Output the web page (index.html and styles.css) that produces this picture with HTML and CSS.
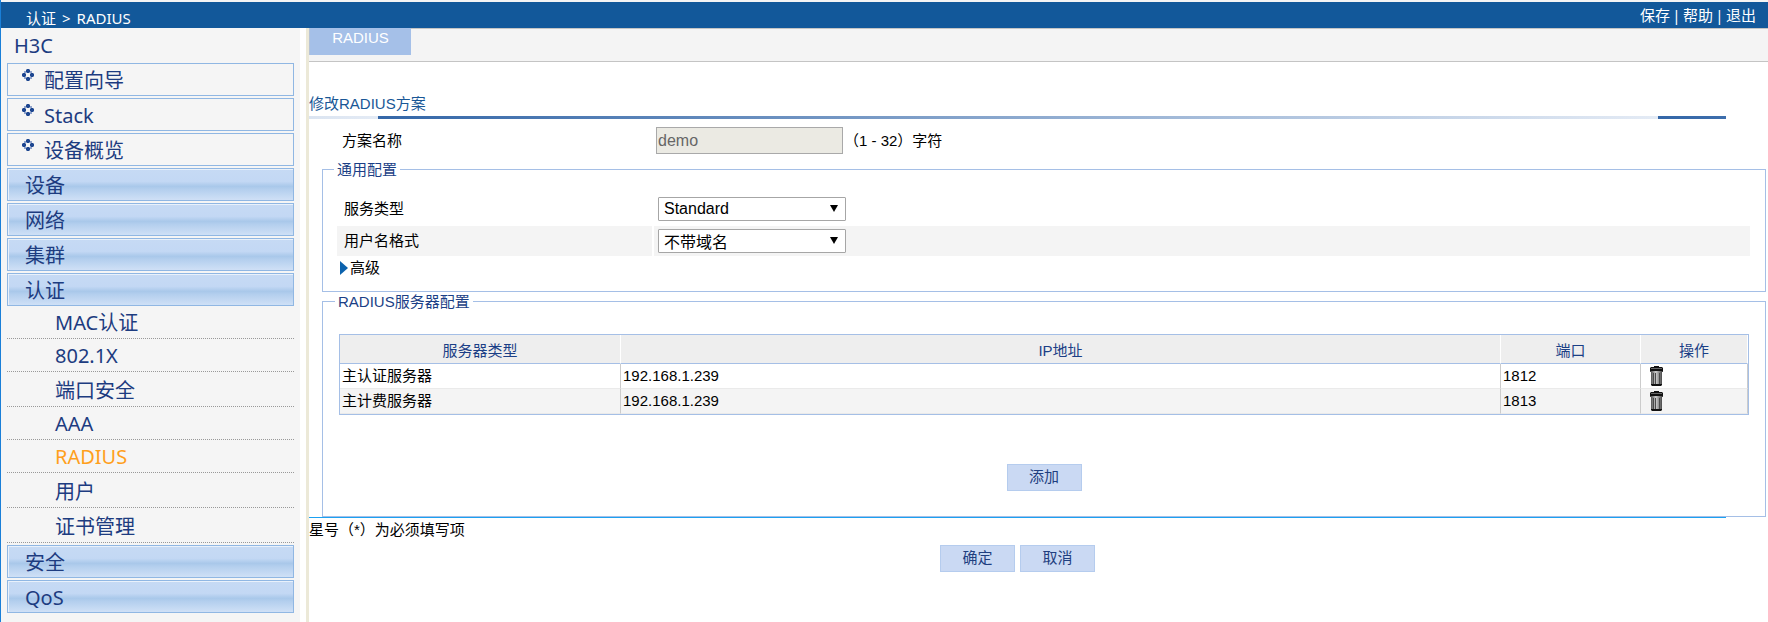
FILE: index.html
```html
<!DOCTYPE html>
<html lang="zh-CN">
<head>
<meta charset="utf-8">
<title>RADIUS</title>
<link rel="stylesheet" href="styles.css">
</head>
<body>
<svg class="defs" width="0" height="0" aria-hidden="true">
  <defs>
    <linearGradient id="metal">
      <stop offset="0" stop-color="#3a3a3a"/>
      <stop offset=".25" stop-color="#8a8a8a"/>
      <stop offset=".45" stop-color="#cfcfcf"/>
      <stop offset=".7" stop-color="#8a8a8a"/>
      <stop offset="1" stop-color="#333"/>
    </linearGradient>
    <symbol id="clover" viewBox="0 0 12 12">
      <g fill="#1d4690">
        <path d="M5 0h2l1 1v2L7 4H5L4 3V1zM5 8h2l1 1v2l-1 1H5l-1-1V9zM1 4h2l1 1v2L3 8H1L0 7V5zM9 4h2l1 1v2l-1 1H9L8 7V5z"/>
      </g>
      <path fill="#8fa3cc" d="M2 2h2v2H2zM8 2h2v2H8zM2 8h2v2H2zM8 8h2v2H8z"/>
    </symbol>
    <symbol id="bin" viewBox="0 0 13 20">
      <path fill="#111" d="M4 0h5v1h3l1 1v3H0V2l1-1h3z"/>
      <path fill="#666" d="M1 2h11v1H1z"/>
      <path fill="url(#metal)" d="M0 5h13v1h-1v12l-1 1H2l-1-1V6H0z"/>
      <path fill="#4a4a4a" d="M3 7h1v11H3zM5 7h1v11H5zM9 7h1v11H9z"/>
      <path fill="#111" d="M1 18h11v1l-1 1H2l-1-1z"/>
    </symbol>
  </defs>
</svg>
<header class="topbar">
  <div class="crumb"><span>认证</span><span>&gt;</span><span>RADIUS</span></div>
  <nav class="toplinks"><a href="#">保存</a><span>|</span><a href="#">帮助</a><span>|</span><a href="#">退出</a></nav>
</header>
<div class="frame">
  <nav class="side">
    <div class="device">H3C</div>
    <div class="menu">
      <a class="quick" href="#"><svg><use href="#clover"/></svg>配置向导</a>
      <a class="quick" href="#"><svg><use href="#clover"/></svg>Stack</a>
      <a class="quick" href="#"><svg><use href="#clover"/></svg>设备概览</a>
      <a class="group" href="#">设备</a>
      <a class="group" href="#">网络</a>
      <a class="group" href="#">集群</a>
      <a class="group" href="#">认证</a>
    </div>
    <div class="submenu">
      <a href="#">MAC认证</a>
      <a href="#">802.1X</a>
      <a class="tall" href="#">端口安全</a>
      <a href="#">AAA</a>
      <a class="current" href="#">RADIUS</a>
      <a class="tall" href="#">用户</a>
      <a class="tall" href="#">证书管理</a>
    </div>
    <div class="menu">
      <a class="group" href="#">安全</a>
      <a class="group" href="#">QoS</a>
    </div>
  </nav>
  <main class="content">
    <div class="tabs"><a class="tab" href="#">RADIUS</a><div class="tabfill"></div></div>
    <h1 class="title">修改RADIUS方案</h1>
    <div class="rule"></div>
    <form class="form">
      <div class="row name">
        <label for="scheme">方案名称</label>
        <input id="scheme" type="text" value="demo" disabled>
        <span>（1 - 32）字符</span>
      </div>
      <fieldset class="general">
        <legend>通用配置</legend>
        <div class="row pair">
          <label for="type">服务类型</label>
          <div class="cell"><span class="picker"><select id="type"><option>Standard</option></select></span></div>
        </div>
        <div class="row pair shaded">
          <label for="format">用户名格式</label>
          <div class="cell"><span class="picker"><select id="format" class="low"><option>不带域名</option></select></span></div>
        </div>
        <button class="advanced" type="button"><svg viewBox="0 0 8 14"><path fill="#0b62ad" d="M0 0l8 7-8 7z"/></svg>高级</button>
      </fieldset>
      <fieldset class="servers">
        <legend>RADIUS服务器配置</legend>
        <table class="grid">
          <colgroup><col class="kind"><col><col class="port"><col class="ops"></colgroup>
          <thead><tr><th>服务器类型</th><th>IP地址</th><th>端口</th><th>操作</th></tr></thead>
          <tbody>
            <tr><td>主认证服务器</td><td>192.168.1.239</td><td>1812</td><td><button class="bin" type="button" aria-label="删除"><svg><use href="#bin"/></svg></button></td></tr>
            <tr><td>主计费服务器</td><td>192.168.1.239</td><td>1813</td><td><button class="bin" type="button" aria-label="删除"><svg><use href="#bin"/></svg></button></td></tr>
          </tbody>
        </table>
        <div class="buttons"><button class="btn" type="button">添加</button></div>
      </fieldset>
      <div class="foot">
        <p class="note">星号（*）为必须填写项</p>
        <div class="buttons"><button class="btn" type="button">确定</button><button class="btn" type="button">取消</button></div>
      </div>
    </form>
  </main>
</div>
</body>
</html>
```
FILE: styles.css
```css
* { box-sizing: border-box; }
body {
  margin: 0;
  min-height: 100vh;
  display: flex;
  flex-direction: column;
  border-left: 1px solid #1a7fd8;
  background: #fff;
  color: #000;
  font: 15px/20px "Liberation Sans", "Noto Sans CJK SC", sans-serif;
}
a { color: inherit; text-decoration: none; }
button, input, select { font: inherit; }
.defs { position: absolute; }

.topbar {
  display: flex;
  justify-content: space-between;
  height: 28px;
  padding: 0 12px 0 25px;
  border-top: 2px solid #f4f4f4;
  background: #12589a;
  color: #fff;
  font-family: "Noto Sans", "Noto Sans CJK SC", sans-serif;
}
.crumb { display: flex; gap: 6px; padding-top: 6px; }
.toplinks { display: flex; padding-top: 3px; }
.toplinks span { width: 13px; text-align: center; }

.frame { flex: 1; display: flex; }
.side {
  flex: none;
  width: 299px;
  padding: 0 6px;
  background: #f5f5f5;
  color: #1d3c80;
  font: 20px/31px "Noto Sans", "Noto Sans CJK SC", sans-serif;
}
.device { padding: 2px 7px; }
.menu { display: grid; gap: 2px; width: 287px; }
.quick, .group { display: flex; height: 33px; border: 1px solid #90b7e3; padding-top: 1px; }
.quick { gap: 10px; padding-left: 14px; }
.quick svg { width: 12px; height: 12px; margin-top: 4px; }
.group {
  padding-left: 17px;
  box-shadow: inset 1px 1px #e9f1fb;
  background: linear-gradient(#c6daf4 0, #c3d8f4 40%, #a9c8ea 56%, #b4cfee 66%, #cfe0f6 100%);
}
.submenu { width: 287px; margin-bottom: 2px; }
.submenu a {
  display: block;
  height: 33px;
  padding: 1px 0 0 48px;
  border-bottom: 1px dotted #999;
}
.submenu .tall { height: 35px; padding-top: 3px; }
.submenu .current { color: #ff9f1c; }

.content { flex: 1; min-width: 0; margin-left: 6px; border-left: 3px solid #ece9d8; }
.tabs { display: flex; height: 34px; border-bottom: 1px solid #c4c4c4; background: #f4f4f4; }
.tab { width: 102px; height: 27px; border-left: 1px solid #b8c4d6; background: #a5c0e8; color: #fff; text-align: center; line-height: 19px; }
.tabfill { flex: 1; border-top: 1px solid #c4c4c4; }
.title { margin: 32px 0 2px; color: #195796; font-size: 15px; font-weight: normal; line-height: 20px; }
.rule {
  height: 3px;
  margin-right: 42px;
  background: linear-gradient(90deg, #3467a8, #e4ebf5) 69px 0 / 1280px 3px repeat-x;
}
.row { display: flex; align-items: center; }
.name { height: 27px; margin: 8px 0 5px 33px; }
.name label { width: 314px; }
.name input { width: 187px; height: 27px; padding: 0 1px; border: 1px solid #a9a9a9; background: #ebeae3; color: #666; font-size: 16px; }
.name span { padding-left: 1px; }
fieldset { min-width: 0; margin: 0 2px 0 13px; border: 1px solid #a5bfe6; }
legend { padding: 1px 3px 0; color: #1b3f86; line-height: 20px; }
.general { padding: 14px 15px 11px 14px; margin-bottom: -1px; }
.general legend, .servers legend { margin-left: -3px; }
.servers legend { margin-left: -4px; }
.pair { gap: 2px; height: 30px; margin-bottom: 2px; }
.pair label { flex: none; width: 315px; padding-left: 7px; line-height: 30px; }
.cell { flex: 1; display: flex; align-items: center; height: 30px; padding-left: 4px; }
.shaded { margin-bottom: 0; }
.shaded label, .shaded .cell { background: #f4f4f4; }
.picker { position: relative; width: 188px; height: 24px; }
.picker::after {
  content: "";
  position: absolute;
  top: 8px;
  right: 8px;
  border: 4px solid transparent;
  border-top: 7px solid #000;
  border-bottom: 0;
  pointer-events: none;
}
select { display: block; width: 100%; height: 24px; padding: 0 5px; border: 1px solid #a6a6a6; border-radius: 1px; appearance: none; background: #fff; color: #000; font-size: 16px; }
select.low { padding-top: 3px; }
.advanced { display: flex; align-items: center; gap: 2px; padding: 2px 3px; border: 0; background: none; color: #000; }
.advanced svg { width: 8px; height: 14px; }
.servers { padding: 22px 16px 25px; }
.grid { width: 100%; table-layout: fixed; border-collapse: separate; border-spacing: 0; border: 1px solid #a5bfe6; }
.kind { width: 281px; }
.port { width: 140px; }
.ops { width: 107px; }
.grid th { height: 29px; padding: 4px 0 0; border-right: 1px solid #fff; border-bottom: 1px solid #a5bfe6; background: #eee; color: #1b3f86; font-weight: normal; }
.grid td { height: 25px; padding: 0 2px; border-right: 1px solid #ccc; border-bottom: 1px solid #eaeaea; }
.grid tbody tr:nth-child(even) { background: #f4f4f4; }
.bin { display: block; margin-left: 7px; padding: 0; border: 0; background: none; }
.bin svg { display: block; width: 13px; height: 20px; }
.buttons { display: flex; justify-content: center; gap: 5px; }
.servers .buttons { margin-top: 49px; }
.btn { width: 75px; height: 27px; padding: 0 0 2px; border: 1px solid #b5ccee; background: #cad9f3; color: #1f3f80; }
.foot { margin-right: 42px; border-top: 1px solid #1ba1f2; }
.note { margin: 0 0 5px; padding-top: 2px; }
```
